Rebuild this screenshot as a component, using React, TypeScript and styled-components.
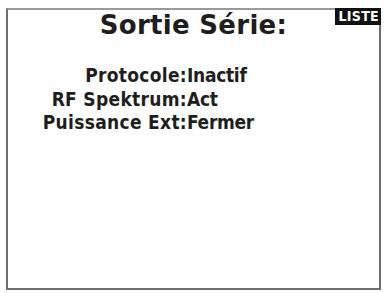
import React from "react";
import styled, { createGlobalStyle } from "styled-components";

const GlobalStyle = createGlobalStyle`
  html, body {
    margin: 0;
    padding: 0;
    background: #ffffff;
  }
`;

const rows = [
  { label: "Protocole", value: "Inactif" },
  { label: "RF Spektrum", value: "Act" },
  { label: "Puissance Ext", value: "Fermer" },
];

export default function App() {
  return (
    <>
      <GlobalStyle />
      <Page>
        <Screen>
          <Header>
            <Title>Sortie Série:</Title>
            <Badge>LISTE</Badge>
          </Header>
          <Settings>
            {rows.map((row) => (
              <React.Fragment key={row.label}>
                <Label>{row.label}:</Label>
                <Value>{row.value}</Value>
              </React.Fragment>
            ))}
          </Settings>
        </Screen>
      </Page>
    </>
  );
}

const Page = styled.div`
  width: 385px;
  height: 293px;
  padding: 8px 4px 3px 6px;
  box-sizing: border-box;
  background: #fff;
`;

const Screen = styled.div`
  position: relative;
  height: 100%;
  box-sizing: border-box;
  border: 2px solid #6e6e6e;
  border-top-color: #9a9a9a;
  background: #fff;
  display: flex;
  flex-direction: column;
`;

const Header = styled.div`
  display: flex;
  justify-content: center;
  padding-top: 1px;
`;

const Title = styled.h1`
  margin: 0;
  font-family: "DejaVu Sans", sans-serif;
  font-weight: bold;
  font-size: 26px;
  line-height: 28px;
  color: #1e1e1e;
  letter-spacing: 0.3px;
`;

const Badge = styled.span`
  position: absolute;
  top: -2px;
  right: -2px;
  height: 17px;
  background: #111;
  color: #fff;
  font-family: "DejaVu Sans Condensed", sans-serif;
  font-weight: bold;
  font-size: 14px;
  line-height: 17px;
  letter-spacing: 0.3px;
  padding: 0 2px 0 4px;
`;

const Settings = styled.div`
  display: grid;
  grid-template-columns: 179px auto;
  margin-top: 25px;
  font-family: "DejaVu Sans Condensed", sans-serif;
  font-weight: bold;
  font-size: 19px;
  line-height: 23.5px;
  color: #1e1e1e;
`;

const Label = styled.span`
  text-align: right;
  white-space: nowrap;
  letter-spacing: 0.3px;
`;

const Value = styled.span`
  white-space: nowrap;
  letter-spacing: -0.3px;
`;
